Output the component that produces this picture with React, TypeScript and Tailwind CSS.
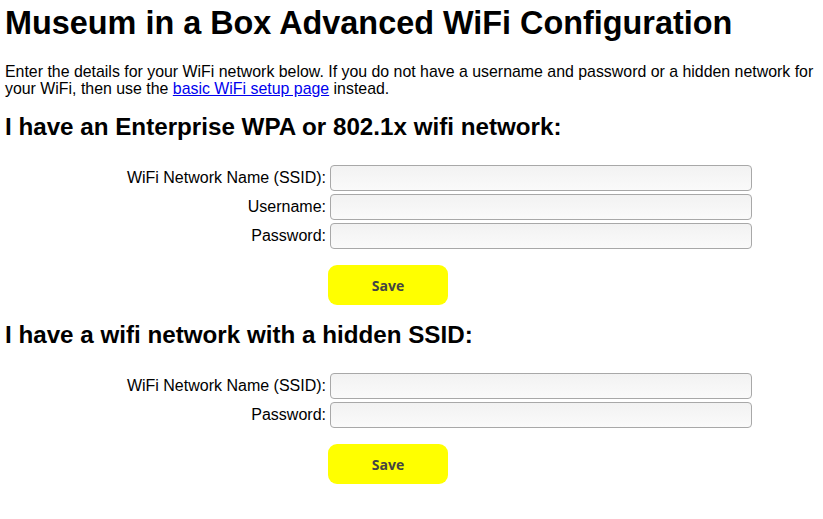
import React from "react";

const sans = "font-['Liberation_Sans',Arial,sans-serif]";

function Field(props: { label: string; type?: string }) {
  return (
    <div className="flex flex-row items-center h-[26px]">
      <label className="w-[321px] text-right text-[16px] leading-[18px]">
        {props.label}
      </label>
      <input
        type={props.type || "text"}
        className="ml-[4px] w-[422px] h-[26px] rounded-[4px] border border-[#a8a8a8] bg-gradient-to-b from-[#f2f2f2] to-[#fafafa] outline-none px-1"
      />
    </div>
  );
}

function SaveButton() {
  return (
    <button className="ml-[323px] mt-[16px] w-[120px] h-[40px] rounded-[9px] bg-[#ffff00] text-[#444444] text-[14px] font-bold font-['Open_Sans',sans-serif]">
      Save
    </button>
  );
}

export default function App() {
  return (
    <div className={`${sans} text-black bg-white pl-[5px] pt-[5px] pb-6 w-[823px] min-h-[519px]`}>
      <h1 className="text-[32.4px] leading-[37px] font-bold">
        Museum in a Box Advanced WiFi Configuration
      </h1>
      <p className="mt-[21px] text-[15.9px] leading-[17px]">
        Enter the details for your WiFi network below. If you do not have a
        username and password or a hidden network for your WiFi, then use the{" "}
        <a href="#" className="text-[#0000ee] underline">
          basic WiFi setup page
        </a>{" "}
        instead.
      </p>

      <h2 className="mt-[16px] text-[24.2px] leading-[28px] font-bold">
        I have an Enterprise WPA or 802.1x wifi network:
      </h2>
      <form className="flex flex-col mt-[24px]" onSubmit={(e) => e.preventDefault()}>
        <div className="flex flex-col gap-[3px]">
          <Field label="WiFi Network Name (SSID):" />
          <Field label="Username:" />
          <Field label="Password:" type="password" />
        </div>
        <div>
          <SaveButton />
        </div>
      </form>

      <h2 className="mt-[16px] text-[24.2px] leading-[28px] font-bold">
        I have a wifi network with a hidden SSID:
      </h2>
      <form className="flex flex-col mt-[24px]" onSubmit={(e) => e.preventDefault()}>
        <div className="flex flex-col gap-[3px]">
          <Field label="WiFi Network Name (SSID):" />
          <Field label="Password:" type="password" />
        </div>
        <div>
          <SaveButton />
        </div>
      </form>
    </div>
  );
}
